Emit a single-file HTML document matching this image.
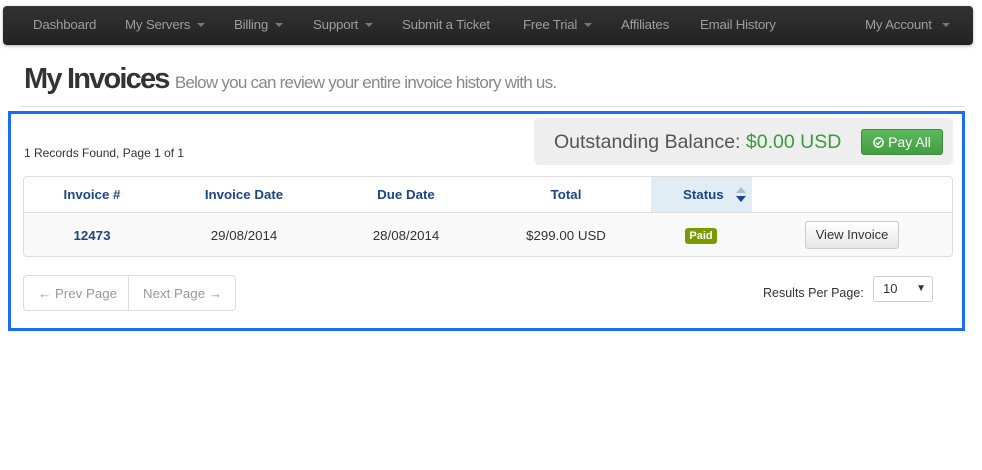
<!DOCTYPE html>
<html><head><meta charset="utf-8"><style>
*{box-sizing:border-box;margin:0;padding:0}
body{width:982px;height:470px;background:#fff;font-family:"Liberation Sans",Arial,sans-serif;position:relative;overflow:hidden;font-size:13px;color:#333}
.nav{position:absolute;left:3px;top:6px;width:970px;height:39px;background:linear-gradient(#333,#222);border-radius:4px;box-shadow:0 1px 3px rgba(0,0,0,.3)}
.nav span{position:absolute;top:11px;color:#9d9d9d;font-size:13.3px;letter-spacing:-0.2px}
.car{display:inline-block;width:0;height:0;border-left:4px solid transparent;border-right:4px solid transparent;border-top:4px solid #777;vertical-align:middle;margin-left:7px}
.a{position:absolute}
h1{position:absolute;left:24px;top:63px;font-size:29px;font-weight:bold;color:#333;letter-spacing:-1.8px;white-space:nowrap}
h1 small{font-size:17px;font-weight:normal;color:#888;letter-spacing:-0.75px}
.hr{position:absolute;left:20px;top:106px;width:945px;height:1px;background:#ddd}
.box{position:absolute;left:8px;top:111px;width:957px;height:220px;border:3px solid #1a6ef5}
.bal{position:absolute;left:534px;top:118px;width:419px;height:47px;background:#eee;border-radius:5px}
.pay{position:absolute;left:861px;top:129px;width:82px;height:26px;background:linear-gradient(#5cb85c,#449d44);border:1px solid #3d8b3d;border-radius:3px;color:#fff;font-size:14px;text-align:center;line-height:24px}
.tbl{position:absolute;left:23px;top:176px;width:930px;height:81px;border:1px solid #ddd;border-radius:4px;overflow:hidden}
.th{position:absolute;top:0;height:35px;line-height:35px;font-weight:bold;color:#1c4587;font-size:13.3px;text-align:center}
.row{position:absolute;left:0;top:35px;width:930px;height:45px;background:#f9f9f9;border-top:1px solid #ddd}
.td{position:absolute;top:0;line-height:45px;text-align:center;font-size:13.3px;color:#333}
.btn{position:absolute;border:1px solid #ccc;background:linear-gradient(#fff,#e6e6e6);border-radius:3px;text-align:center;color:#333}
</style></head><body>
<div class="nav">
<span style="left:30px">Dashboard</span>
<span style="left:122px">My Servers<i class="car"></i></span>
<span style="left:231px">Billing<i class="car"></i></span>
<span style="left:310px">Support<i class="car"></i></span>
<span style="left:399px">Submit a Ticket</span>
<span style="left:520px">Free Trial<i class="car"></i></span>
<span style="left:618px">Affiliates</span>
<span style="left:697px">Email History</span>
<span style="left:862px">My Account<i class="car" style="margin-left:10px"></i></span>
</div>
<h1>My Invoices <small>Below you can review your entire invoice history with us.</small></h1>
<div class="hr"></div>
<div class="box"></div>
<div class="a" style="left:24px;top:146px;font-size:12px;color:#333">1 Records Found, Page 1 of 1</div>
<div class="bal"><div class="a" style="left:20px;top:13px;font-size:19.5px;color:#555;white-space:nowrap">Outstanding Balance: <span style="color:#3c9a3c">$0.00 USD</span></div></div>
<div class="pay"><svg width="11" height="11" viewBox="0 0 12 12" style="vertical-align:-1px;margin-right:4px"><circle cx="6" cy="6" r="5" fill="none" stroke="#fff" stroke-width="1.6"/><path d="M3.5 6.2L5.3 8L8.6 4.3" fill="none" stroke="#fff" stroke-width="1.5"/></svg>Pay All</div>
<div class="tbl">
<div class="th" style="left:0;width:136px">Invoice #</div>
<div class="th" style="left:160px;width:120px">Invoice Date</div>
<div class="th" style="left:322px;width:120px">Due Date</div>
<div class="th" style="left:482px;width:120px">Total</div>
<div class="th" style="left:627px;width:101px;background:#e1edf5;text-align:left;padding-left:32px">Status
<svg width="10" height="18" style="position:absolute;left:85px;top:9px" viewBox="0 0 10 18"><path d="M0 7L5 1L10 7Z" fill="#a9bfd6"/><path d="M0 10L5 16L10 10Z" fill="#1c4587"/></svg></div>
<div class="row">
<div class="td" style="left:0;width:136px;font-weight:bold;color:#1c4587">12473</div>
<div class="td" style="left:160px;width:120px">29/08/2014</div>
<div class="td" style="left:322px;width:120px">28/08/2014</div>
<div class="td" style="left:482px;width:120px">$299.00 USD</div>
<div class="a" style="left:661px;top:15px;width:32px;height:16px;background:#7a9a01;border-radius:3px;color:#fff;font-size:11px;font-weight:bold;text-align:center;line-height:16px">Paid</div>
<div class="btn" style="left:781px;top:8px;width:94px;height:28px;line-height:26px">View Invoice</div>
</div></div>
<div class="a" style="left:23px;top:275px;width:213px;height:36px;border:1px solid #ddd;border-radius:4px"></div>
<div class="a" style="left:128px;top:276px;width:1px;height:34px;background:#ddd"></div>
<div class="a" style="left:38px;top:286px;color:#999;font-size:13.3px">← Prev Page</div>
<div class="a" style="left:143px;top:286px;color:#999;font-size:13.3px">Next Page →</div>
<div class="a" style="left:763px;top:286px;font-size:12.5px;color:#333">Results Per Page:</div>
<div class="a" style="left:873px;top:276px;width:60px;height:26px;border:1px solid #ccc;border-radius:3px;background:#fff;font-size:13px;line-height:24px;padding-left:9px">10<span style="position:absolute;right:6px;font-size:10px">▼</span></div>
</body></html>
